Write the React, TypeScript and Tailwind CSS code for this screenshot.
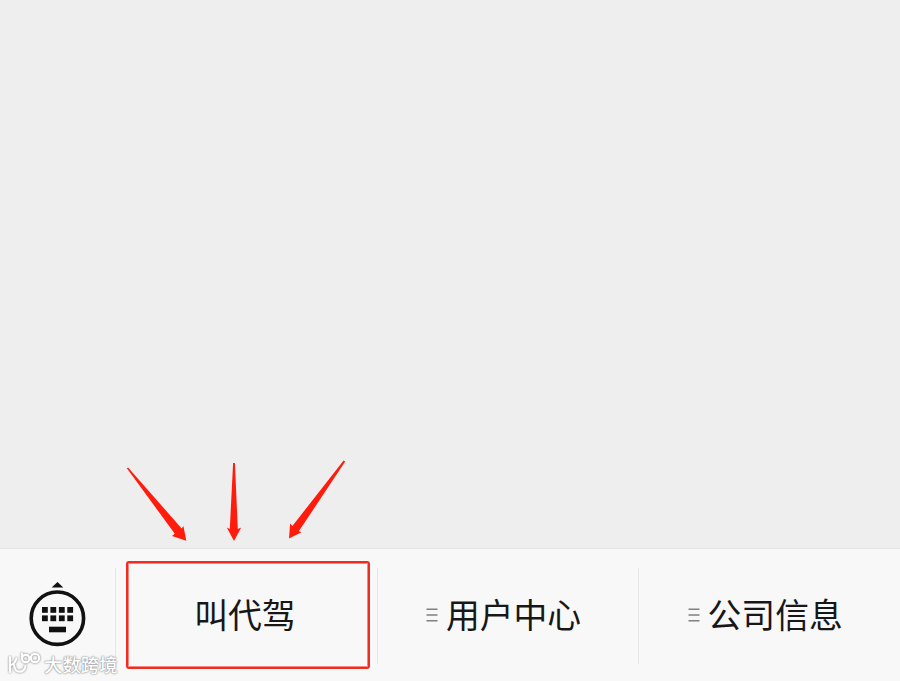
const menuItems = [
  { label: "叫代驾", hasSubmenu: false, highlighted: true },
  { label: "用户中心", hasSubmenu: true, highlighted: false },
  { label: "公司信息", hasSubmenu: true, highlighted: false },
];

function KeyboardIcon() {
  return (
    <svg width="58" height="66" viewBox="0 0 58 66" fill="#111">
      <path d="M29.5 1 L35.3 6.6 H23.7 Z" />
      <circle cx="29.4" cy="37.2" r="26.2" fill="none" stroke="#111" strokeWidth="3.6" />
      {[14, 22.4, 30.9, 39.3].map((x) => (
        <g key={x}>
          <rect x={x} y="26" width="5.8" height="5.8" />
          <rect x={x} y="34.4" width="5.8" height="5.8" />
        </g>
      ))}
      <rect x="21" y="45.7" width="17" height="5.6" />
    </svg>
  );
}

function SubmenuIcon() {
  return (
    <svg width="12" height="16" viewBox="0 0 12 16" stroke="#808080" strokeWidth="1.4">
      <path d="M0.5 3.2 H11.5 M0.5 9 H11.5 M0.5 14.8 H11.5" />
    </svg>
  );
}

function Arrows() {
  return (
    <svg
      className="absolute left-[120px] top-[455px]"
      width="232"
      height="90"
      viewBox="120 455 232 90"
      fill="#ff1c0c"
    >
      <path d="M126.7 468 L128.3 467.7 L181.7 528.5 L183.4 526 L186.3 540.8 L172 536.1 L174.8 533.8 Z" />
      <path d="M233.1 463 H234.9 L237.8 529 L241.2 527.4 L234 541 L226.8 527.4 L229.8 529 Z" />
      <path d="M343.6 460.5 L345.2 461.6 L298.8 531.3 L301.5 532.3 L289 538.4 L290.1 523.6 L292.4 526 Z" />
    </svg>
  );
}

function Watermark() {
  return (
    <div className="absolute left-[7px] top-[652px] flex items-center gap-[3px]">
      <svg
        className="overflow-visible drop-shadow-[0_0_1px_#777]"
        width="34"
        height="24"
        viewBox="0 0 34 24"
        fill="none"
        stroke="#fff"
        strokeWidth="2.2"
        strokeLinecap="round"
      >
        <path d="M3 5 V20 M3.5 13 C6.5 12.5 8.5 9.5 9.5 6.5 M7 13 C8 22 17 21.5 18.5 14" />
        <path d="M15 1.5 V6.5" />
        <circle cx="18.7" cy="6.5" r="3.7" />
        <circle cx="28" cy="6" r="4.2" />
      </svg>
      <span className="font-['Noto_Sans_CJK_SC',sans-serif] text-[18.4px] leading-6 font-medium whitespace-nowrap text-white [text-shadow:0_0_2px_#777,0_0_1px_#999]">
        大数跨境
      </span>
    </div>
  );
}

export default function App() {
  return (
    <div className="relative flex h-[681px] w-[900px] flex-col overflow-hidden bg-[#eeeeee] font-['Noto_Sans_CJK_SC',sans-serif]">
      <main className="flex-1" />

      <nav className="flex h-[133px] border-t border-[#e4e4e4] bg-[#f8f8f8]">
        <button className="flex w-[115px] items-start justify-center pt-8 pr-px">
          <KeyboardIcon />
        </button>
        {menuItems.map((item) => (
          <div key={item.label} className="flex flex-1">
            <div className="mt-[19px] h-24 w-px bg-[#e6e6e6]" />
            {item.highlighted ? (
              <button className="mt-3 mr-[7px] ml-[10px] flex h-[108px] flex-1 items-center justify-center rounded-[3px] border-2 border-[#f02b20] pr-[6px] pb-[2px] text-[33.8px] leading-none text-[#171717] shadow-[inset_0_0_0_1px_#f9877f]">
                {item.label}
              </button>
            ) : (
              <button className="flex flex-1 items-center justify-center gap-2 pb-[2px] pr-[9px] text-[33.8px] leading-none text-[#171717]">
                {item.hasSubmenu && <SubmenuIcon />}
                <span>{item.label}</span>
              </button>
            )}
          </div>
        ))}
      </nav>

      <Arrows />
      <Watermark />
    </div>
  );
}
